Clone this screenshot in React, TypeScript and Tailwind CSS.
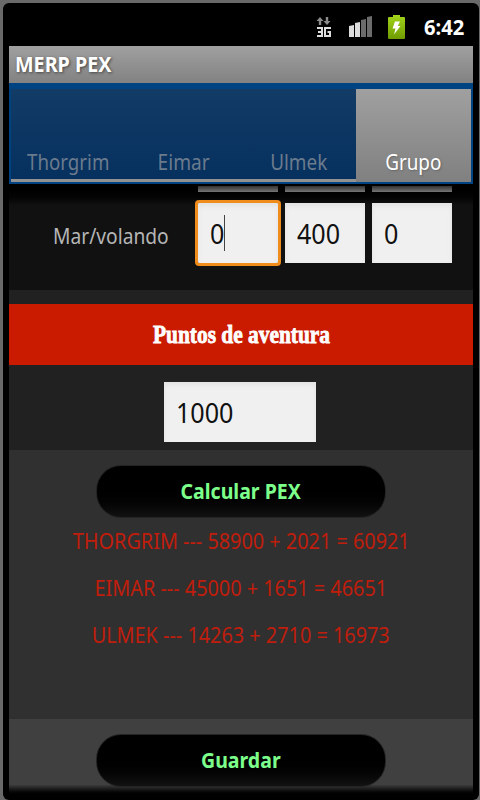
// src/App.tsx
import clsx from 'clsx'

const tabs = [
  { name: 'Thorgrim', active: false, stretch: 'scale-x-[0.89]' },
  { name: 'Eimar', active: false, stretch: 'scale-x-[0.91]' },
  { name: 'Ulmek', active: false, stretch: 'scale-x-[0.9]' },
  { name: 'Grupo', active: true, stretch: 'scale-x-[0.9]' },
]

const seaValues = [
  { value: '0', focused: true },
  { value: '400', focused: false },
  { value: '0', focused: false },
]

const results = [
  { name: 'THORGRIM', base: 58900, gained: 2021 },
  { name: 'EIMAR', base: 45000, gained: 1651 },
  { name: 'ULMEK', base: 14263, gained: 2710 },
]

// ── Status bar icons ───────────────────────────
function DataIcon() {
  return (
    <svg width="16" height="22" viewBox="0 0 16 22">
      <path d="M4 1L7.5 5H5.2V9H2.8V5H0.5ZM11 9L7.5 5H9.8V1H12.2V5H14.5Z" fill="#8b8b8b" />
      <path
        d="M1 12H6V20H1M2 16H6M15 12H9V20H14V16H11.5"
        fill="none"
        stroke="#dedede"
        strokeWidth="2"
      />
    </svg>
  )
}

function SignalIcon() {
  return (
    <svg width="23" height="22" viewBox="0 0 23 22">
      <path d="M0 10L5 9V21H0Z" fill="#dcdcdc" />
      <path d="M6 7L11 6V21H6Z" fill="#dcdcdc" />
      <path d="M12 4L17 3V21H12Z" fill="#6c6c6c" />
      <path d="M18 1L23 0V21H18Z" fill="#6c6c6c" />
    </svg>
  )
}

function BatteryIcon() {
  return (
    <svg width="17" height="24" viewBox="0 0 17 24">
      <defs>
        <linearGradient id="charge" x1="0" y1="0" x2="0" y2="1">
          <stop offset="0" stopColor="#a2d51c" />
          <stop offset="1" stopColor="#6f9c00" />
        </linearGradient>
      </defs>
      <path d="M5 0H12V2H16Q17 2 17 3V23Q17 24 16 24H1Q0 24 0 23V3Q0 2 1 2H5Z" fill="url(#charge)" />
      <path d="M7 6.5H12L9.8 11H12.5L6 19.5L7.5 13.5H4.5Z" fill="#fff" />
    </svg>
  )
}

// ── Form pieces ───────────────────────────
function NumberField({ value, focused }: { value: string; focused: boolean }) {
  return (
    <div
      className={clsx(
        'h-[60px] w-[80px] flex items-center pl-3 bg-[#f0f0f0] text-[27px] leading-none text-[#111] shadow-[inset_0_3px_5px_#e2e2e2]',
        focused && 'outline-[3px] outline-[#f08c1c] rounded-[1px]',
      )}
    >
      <span className="inline-block origin-left scale-x-[0.93]">{value}</span>
      {focused && <span className="h-9 w-px -ml-px bg-[#444]" />}
    </div>
  )
}

function PillButton({ label }: { label: string }) {
  return (
    <button className="h-[53px] w-[290px] shrink-0 rounded-[25px] border-[1.5px] border-[#242424] bg-linear-to-b from-black from-30% to-[#121212] text-[21px] font-bold leading-none text-[#7dff8c]">
      <span className="inline-block scale-x-[0.93]">{label}</span>
    </button>
  )
}

export default function App() {
  return (
    <div className="h-[800px] w-[480px] overflow-hidden bg-[#696969] pl-[3px] pr-px pt-[3px] font-['Noto_Sans',sans-serif]">
      <div className="flex h-[797px] flex-col rounded-[6px] bg-black pl-[6px] pr-[6px]">
        {/* Status bar */}
        <div className="flex h-[43px] shrink-0 items-center justify-end pr-[9px] pt-[5px]">
          <DataIcon />
          <span className="ml-[17px]"><SignalIcon /></span>
          <span className="ml-4"><BatteryIcon /></span>
          <span className="ml-[19px] w-[40px] text-[21px] font-bold leading-none text-white">
            <span className="inline-block origin-left scale-x-[0.96]">6:42</span>
          </span>
        </div>

        {/* Title bar */}
        <div className="flex h-[37px] shrink-0 items-center bg-linear-to-b from-[#a0a0a0] to-[#828282] pl-[6px]">
          <h1 className="origin-left scale-x-[0.94] text-[21px] font-bold leading-none text-white [text-shadow:1px_1px_3px_#444]">
            MERP PEX
          </h1>
        </div>

        {/* Tabs */}
        <div className="flex h-[101px] shrink-0 border-x-2 border-b-2 border-t-[6px] border-[#004383] bg-[#103860]">
          {tabs.map(tab => (
            <div
              key={tab.name}
              className={clsx(
                'flex flex-1 items-end justify-center text-[21px] leading-none',
                tab.active
                  ? 'bg-linear-to-b from-[#a0a0a0] to-[#808080] pb-[9px] text-white [text-shadow:1px_1px_2px_#666]'
                  : 'border-b-[3px] border-[#929292] bg-linear-to-b from-[#123b66] to-[#06305e] pb-[6px] text-[#6b7b8e]',
              )}
            >
              <span className={clsx('inline-block', tab.stretch)}>{tab.name}</span>
            </div>
          ))}
        </div>

        {/* Sea / flying row */}
        <div className="flex h-[106px] shrink-0 flex-col bg-linear-to-b from-black to-[#111] to-20%">
          <div className="flex gap-[7px] pl-[189px] pt-[2px]">
            {seaValues.map((_, i) => (
              <div key={i} className="h-[6px] w-[80px] bg-linear-to-b from-[#333] to-[#777]" />
            ))}
          </div>
          <div className="mt-[11px] flex items-center">
            <div className="w-[189px] pl-[44px] pt-[6px] text-[21px] leading-none text-[#b5b5b5]">
              <span className="inline-block origin-left scale-x-[0.915]">Mar/volando</span>
            </div>
            <div className="flex gap-[7px]">
              {seaValues.map((field, i) => (
                <NumberField key={i} value={field.value} focused={field.focused} />
              ))}
            </div>
          </div>
        </div>

        {/* Adventure points */}
        <div className="h-[160px] shrink-0 bg-[#212121] pt-[14px]">
          <div className="flex h-[61px] items-center justify-center bg-[#ca1b00]">
            <h2 className="scale-x-[0.855] font-['Liberation_Serif',serif] text-[25px] font-bold leading-none text-white [-webkit-text-stroke:0.8px_white]">
              Puntos de aventura
            </h2>
          </div>
          <div className="ml-[155px] mt-[17px] flex h-[60px] w-[152px] items-center bg-[#f0f0f0] pl-3 text-[27px] leading-none text-[#111] shadow-[inset_0_3px_5px_#e2e2e2]">
            <span className="inline-block origin-left scale-x-[0.93]">1000</span>
          </div>
        </div>

        {/* Results */}
        <div className="flex h-[269px] shrink-0 flex-col items-center bg-[#303030] pt-[15px]">
          <PillButton label="Calcular PEX" />
          {results.map(r => (
            <p key={r.name} className="flex h-[47px] scale-x-[0.945] items-center whitespace-nowrap text-[21px] leading-none text-[#c01d0c]">
              {r.name} --- {r.base} + {r.gained} = {r.base + r.gained}
            </p>
          ))}
        </div>

        {/* Save */}
        <div className="flex h-[77px] shrink-0 justify-center bg-linear-to-b from-[#404040] from-85% to-black pt-[15px]">
          <PillButton label="Guardar" />
        </div>
      </div>
    </div>
  )
}
